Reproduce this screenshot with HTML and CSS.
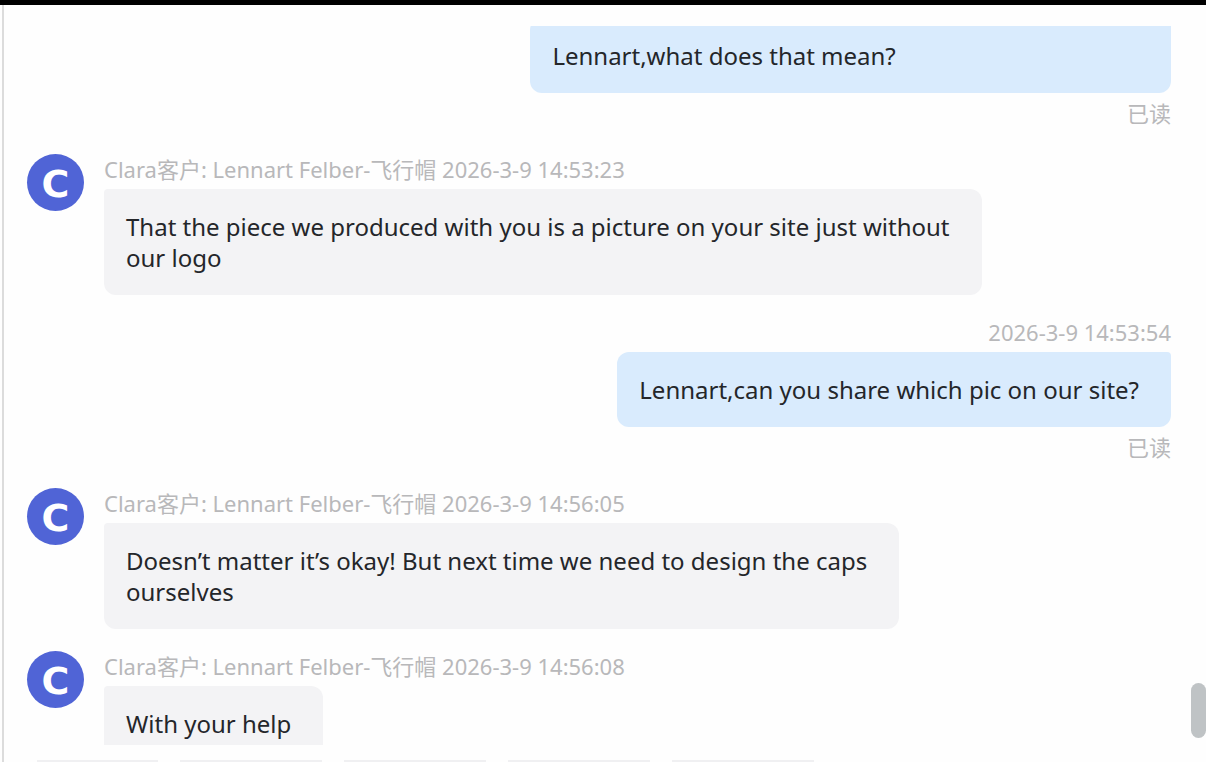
FILE: index.html
```html
<!DOCTYPE html>
<html lang="zh-CN">
<head>
  <meta charset="UTF-8">
  <title>Chat</title>
  <link rel="stylesheet" href="styles.css">
</head>
<body>
  <div class="window">
    <main class="chat">
      <div class="message mine">
        <p class="bubble wide">Lennart,what does that mean?</p>
        <span class="read">已读</span>
      </div>

      <div class="message">
        <div class="avatar">C</div>
        <div class="content">
          <div class="meta">Clara客户: Lennart Felber-飞行帽 2026-3-9 14:53:23</div>
          <p class="bubble">That the piece we produced with you is a picture on your site just without<br>our logo</p>
        </div>
      </div>

      <div class="message mine">
        <div class="meta">2026-3-9 14:53:54</div>
        <p class="bubble">Lennart,can you share which pic on our site?</p>
        <span class="read">已读</span>
      </div>

      <div class="message">
        <div class="avatar">C</div>
        <div class="content">
          <div class="meta">Clara客户: Lennart Felber-飞行帽 2026-3-9 14:56:05</div>
          <p class="bubble">Doesn’t matter it’s okay! But next time we need to design the caps<br>ourselves</p>
        </div>
      </div>

      <div class="message">
        <div class="avatar">C</div>
        <div class="content">
          <div class="meta">Clara客户: Lennart Felber-飞行帽 2026-3-9 14:56:08</div>
          <p class="bubble">With your help</p>
        </div>
      </div>
    </main>
    <div class="scroll-thumb"></div>
    <footer class="toolbar">
      <div class="chip small"></div>
      <div class="chip"></div>
      <div class="chip"></div>
      <div class="chip"></div>
      <div class="chip"></div>
    </footer>
  </div>
</body>
</html>
```

FILE: styles.css
```css
* {
  box-sizing: border-box;
}

body {
  margin: 0;
  background: #fefefe;
  font-family: "Noto Sans", "Noto Sans CJK SC", sans-serif;
  color: #24262a;
}

.window {
  position: relative;
  display: flex;
  flex-direction: column;
  height: 100vh;
  overflow: hidden;
  border-top: 5px solid #000;
  padding-top: 21px;
}

.window::before {
  content: "";
  position: absolute;
  top: 0;
  bottom: 0;
  left: 2px;
  width: 2px;
  background: #dcdcdc;
}

.chat {
  flex: 1;
  min-height: 0;
  overflow: hidden;
  padding: 0 35px 0 27px;
}

.message {
  display: flex;
  gap: 20px;
  margin-bottom: 22px;
}

/* the list is scrolled a little past the first bubble */
.message:first-child {
  margin-top: -8px;
}

.mine {
  flex-direction: column;
  align-items: flex-end;
  gap: 0;
  margin-bottom: 26px;
}

.avatar {
  flex: none;
  width: 57px;
  height: 57px;
  border-radius: 50%;
  background: #5064d6;
  color: white;
  font: bold 38px/60px "DejaVu Sans", sans-serif;
  text-align: center;
}

.meta,
.read {
  font-size: 22px;
  line-height: 30px;
  color: #b8b8ba;
}

.meta {
  margin-bottom: 5px;
}

.read {
  margin-top: 5px;
}

.bubble {
  width: fit-content;
  margin: 0;
  padding: 22px 32px 22px 22px;
  border-radius: 4px 12px 12px 12px;
  background: #f3f3f5;
  font-size: 24px;
  line-height: 31px;
}

.mine .bubble {
  border-radius: 12px 4px 12px 12px;
  background: #d9ebfd;
}

.mine .wide {
  width: 56%;
}

.scroll-thumb {
  position: absolute;
  right: 0;
  bottom: 24px;
  width: 15px;
  height: 55px;
  border-radius: 8px;
  background: #bfc3c5;
}

.toolbar {
  display: flex;
  gap: 22px;
  height: 17px;
  padding: 15px 0 0 37px;
  overflow: hidden;
}

.chip {
  width: 142px;
  background: #f0f0f2;
}

.small {
  width: 121px;
}
```
